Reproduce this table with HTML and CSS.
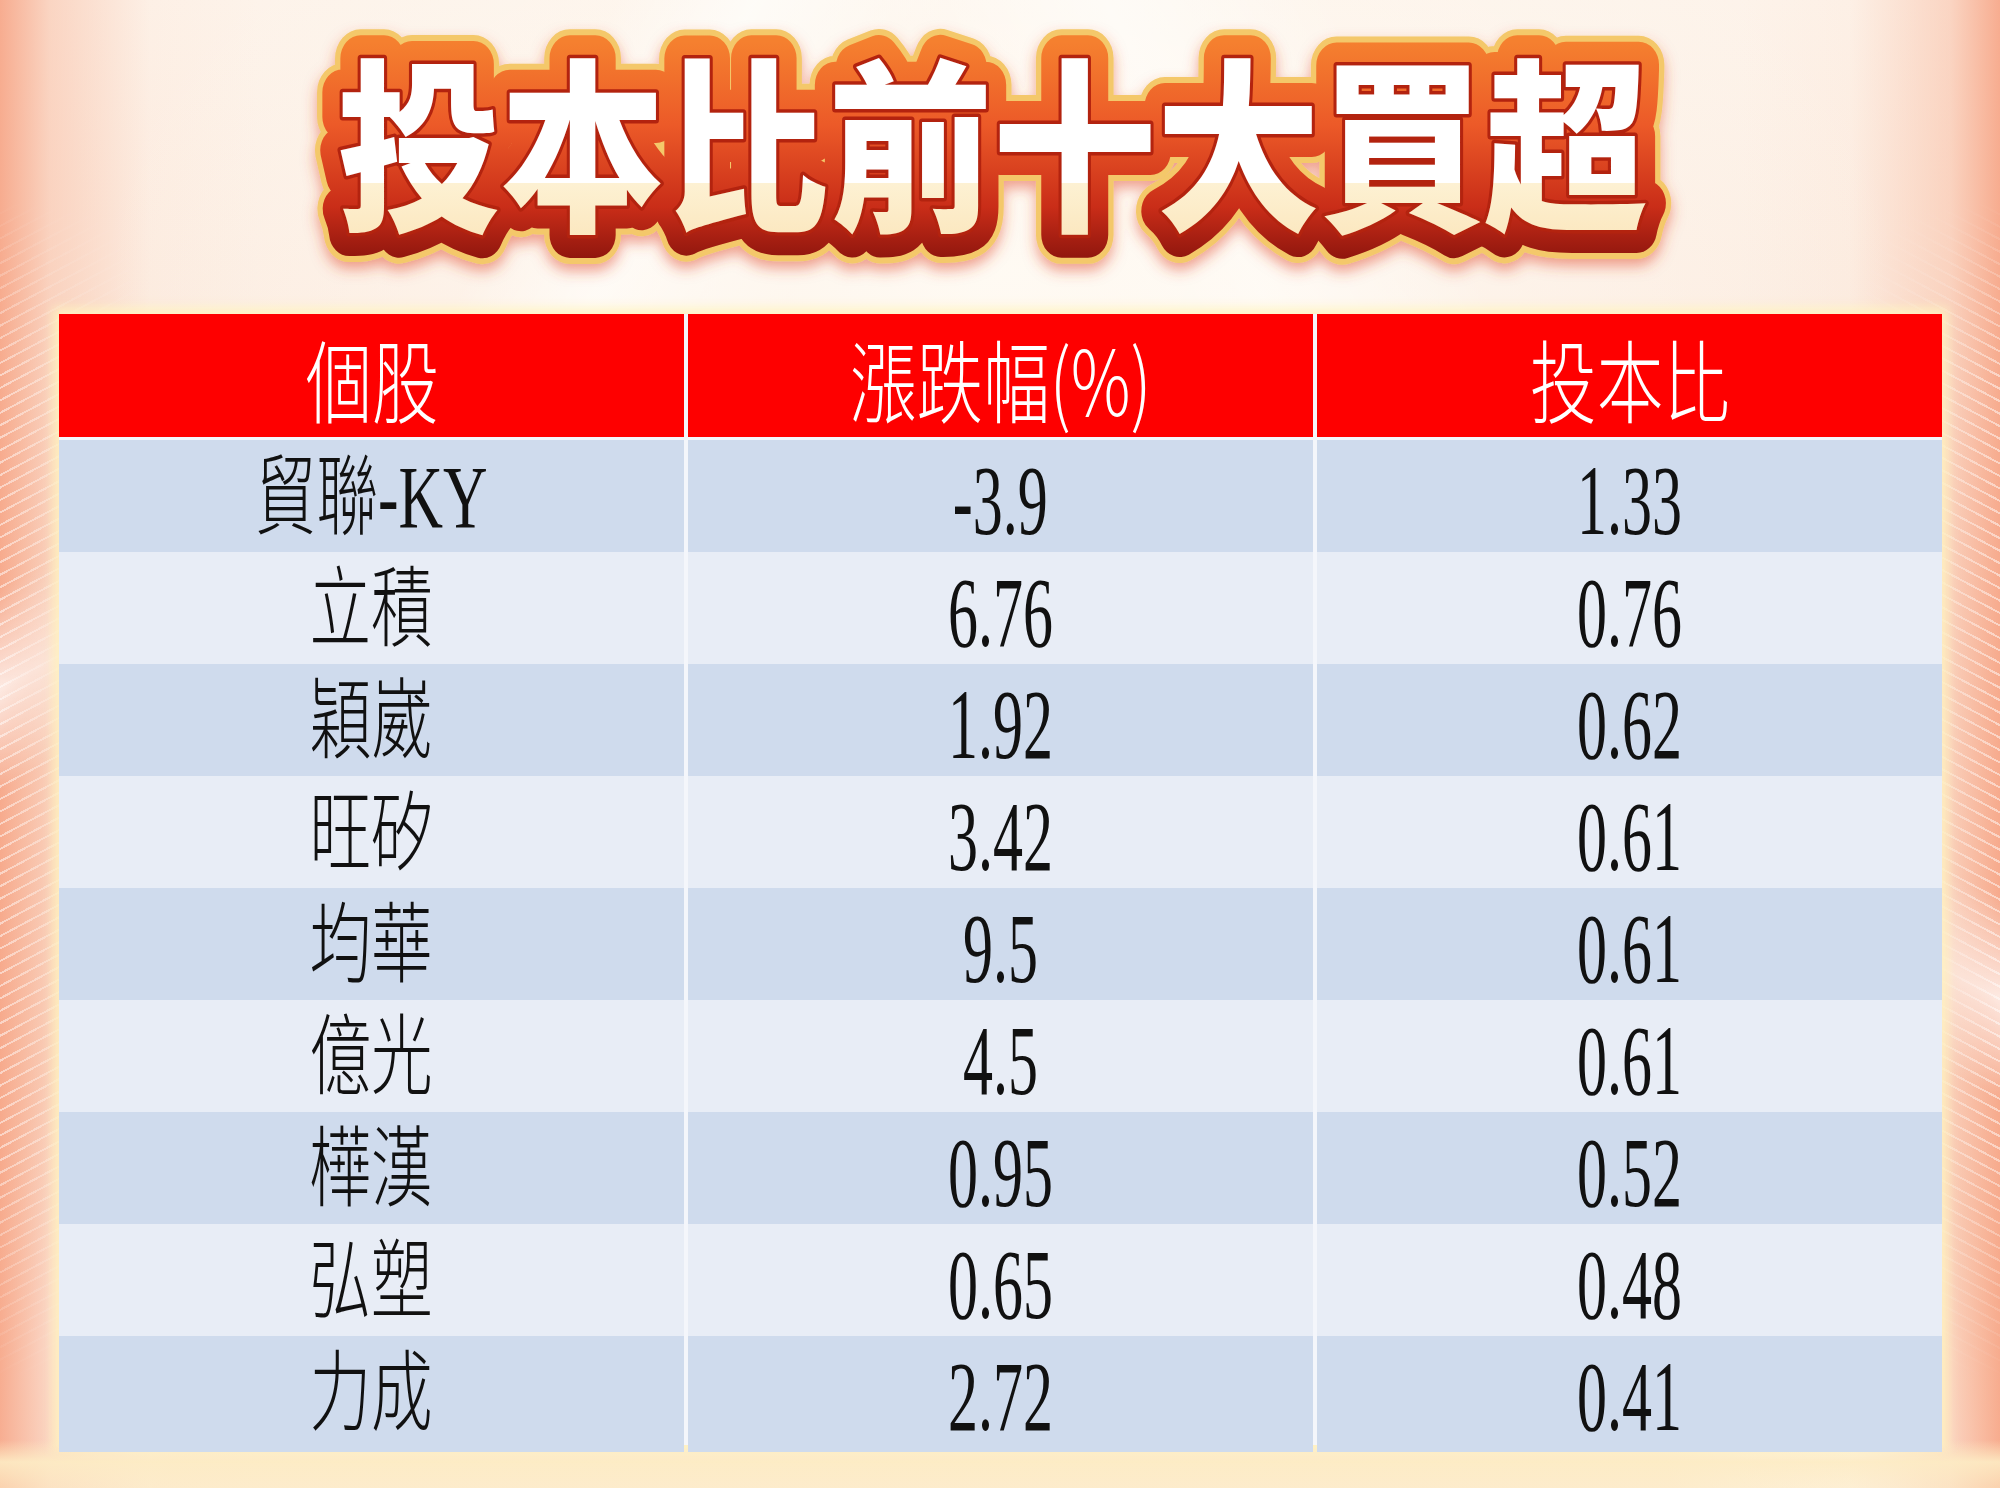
FILE: index.html
```html
<!DOCTYPE html>
<html lang="zh-Hant">
<head>
<meta charset="utf-8">
<title>投本比前十大買超</title>
<link rel="stylesheet" href="styles.css">
</head>
<body>
<div class="deco deco-left"></div>
<div class="deco deco-right"></div>
<main class="page">
  <svg class="title" width="1400" height="280" viewBox="0 0 1400 280">
    <defs>
      <linearGradient id="redGrad" gradientUnits="userSpaceOnUse" x1="0" y1="22" x2="0" y2="258">
        <stop offset="0" stop-color="#f5802f"/>
        <stop offset="0.35" stop-color="#ec5a28"/>
        <stop offset="0.7" stop-color="#c92d18"/>
        <stop offset="1" stop-color="#7a0d0a"/>
      </linearGradient>
      <linearGradient id="fillGrad" gradientUnits="userSpaceOnUse" x1="0" y1="40" x2="0" y2="232">
        <stop offset="0" stop-color="#ffffff"/>
        <stop offset="0.64" stop-color="#ffffff"/>
        <stop offset="0.64" stop-color="#fdf1d3"/>
        <stop offset="1" stop-color="#fbe5ba"/>
      </linearGradient>
      <filter id="glow" x="-5%" y="-20%" width="110%" height="150%">
        <feDropShadow dx="0" dy="7" stdDeviation="7" flood-color="#e0452c" flood-opacity="0.5"/>
      </filter>
    </defs>
    <use href="#titleText" class="t-gold" filter="url(#glow)"/>
    <use href="#titleText" class="t-red"/>
    <use href="#titleText" class="t-edge"/>
    <text id="titleText" class="t-fill" x="37" y="197" textLength="1311" lengthAdjust="spacingAndGlyphs">投本比前十大買超</text>
  </svg>

  <section class="table">
    <div class="row head">
      <div class="cell"><span class="h">個股</span></div>
      <div class="cell"><span class="h">漲跌幅(%)</span></div>
      <div class="cell"><span class="h">投本比</span></div>
    </div>
    <div class="row odd">
      <div class="cell"><span class="n">貿聯-KY</span></div>
      <div class="cell"><span class="v">-3.9</span></div>
      <div class="cell"><span class="v">1.33</span></div>
    </div>
    <div class="row even">
      <div class="cell"><span class="n">立積</span></div>
      <div class="cell"><span class="v">6.76</span></div>
      <div class="cell"><span class="v">0.76</span></div>
    </div>
    <div class="row odd">
      <div class="cell"><span class="n">穎崴</span></div>
      <div class="cell"><span class="v">1.92</span></div>
      <div class="cell"><span class="v">0.62</span></div>
    </div>
    <div class="row even">
      <div class="cell"><span class="n">旺矽</span></div>
      <div class="cell"><span class="v">3.42</span></div>
      <div class="cell"><span class="v">0.61</span></div>
    </div>
    <div class="row odd">
      <div class="cell"><span class="n">均華</span></div>
      <div class="cell"><span class="v">9.5</span></div>
      <div class="cell"><span class="v">0.61</span></div>
    </div>
    <div class="row even">
      <div class="cell"><span class="n">億光</span></div>
      <div class="cell"><span class="v">4.5</span></div>
      <div class="cell"><span class="v">0.61</span></div>
    </div>
    <div class="row odd">
      <div class="cell"><span class="n">樺漢</span></div>
      <div class="cell"><span class="v">0.95</span></div>
      <div class="cell"><span class="v">0.52</span></div>
    </div>
    <div class="row even">
      <div class="cell"><span class="n">弘塑</span></div>
      <div class="cell"><span class="v">0.65</span></div>
      <div class="cell"><span class="v">0.48</span></div>
    </div>
    <div class="row odd">
      <div class="cell"><span class="n">力成</span></div>
      <div class="cell"><span class="v">2.72</span></div>
      <div class="cell"><span class="v">0.41</span></div>
    </div>
  </section>
</main>
</body>
</html>
```

FILE: styles.css
```css
html, body {
  margin: 0;
  padding: 0;
}

body {
  width: 2000px;
  height: 1500px;
  overflow: hidden;
  position: relative;
  font-family: "Liberation Serif", "Noto Sans CJK TC", serif;
  background:
    linear-gradient(to bottom, rgba(255,255,255,0) 1488px, #ffffff 1488px),
    linear-gradient(to bottom, rgba(255,255,255,0) 1440px, rgba(253,236,196,0.9) 1462px, rgba(253,236,196,0.6) 1486px),
    radial-gradient(ellipse 900px 520px at 50% 18%, rgba(255,251,244,0.95) 0, rgba(255,251,244,0) 100%),
    linear-gradient(to right, rgba(246,160,128,0.85) 0, rgba(248,188,162,0.55) 50px, rgba(252,222,205,0.15) 150px, rgba(255,255,255,0) 260px),
    linear-gradient(to left, rgba(246,160,128,0.85) 0, rgba(248,188,162,0.55) 50px, rgba(252,222,205,0.15) 150px, rgba(255,255,255,0) 260px),
    linear-gradient(118deg, rgba(255,255,255,0) 0, rgba(255,255,255,0) 22%, rgba(255,255,255,0.75) 27%, rgba(255,255,255,0) 34%),
    linear-gradient(62deg, rgba(255,255,255,0) 60%, rgba(255,255,255,0.7) 68%, rgba(255,255,255,0) 76%),
    linear-gradient(to bottom, #fdf3ea 0, #fbe6d8 40%, #fbe2d2 75%, #fdecd6 100%);
}

.deco {
  position: absolute;
  top: 200px;
  width: 200px;
  height: 1180px;
  pointer-events: none;
}

.deco-left {
  left: 0;
  background:
    linear-gradient(152deg, rgba(255,255,255,0) 30%, rgba(255,255,255,0.75) 38%, rgba(255,255,255,0) 46%),
    repeating-linear-gradient(152deg, rgba(255,255,255,0.5) 0 2px, rgba(255,255,255,0) 2px 11px);
  -webkit-mask-image: linear-gradient(to right, #000 0, rgba(0,0,0,0.55) 55px, transparent 150px), linear-gradient(to bottom, transparent 0, #000 15%, #000 80%, transparent 100%);
  -webkit-mask-composite: source-in;
  mask-image: linear-gradient(to right, #000 0, rgba(0,0,0,0.55) 55px, transparent 150px), linear-gradient(to bottom, transparent 0, #000 15%, #000 80%, transparent 100%);
  mask-composite: intersect;
}

.deco-right {
  right: 0;
  background:
    linear-gradient(28deg, rgba(255,255,255,0) 30%, rgba(255,255,255,0.75) 38%, rgba(255,255,255,0) 46%),
    repeating-linear-gradient(28deg, rgba(255,255,255,0.5) 0 2px, rgba(255,255,255,0) 2px 11px);
  -webkit-mask-image: linear-gradient(to left, #000 0, rgba(0,0,0,0.55) 55px, transparent 150px), linear-gradient(to bottom, transparent 0, #000 15%, #000 80%, transparent 100%);
  -webkit-mask-composite: source-in;
  mask-image: linear-gradient(to left, #000 0, rgba(0,0,0,0.55) 55px, transparent 150px), linear-gradient(to bottom, transparent 0, #000 15%, #000 80%, transparent 100%);
  mask-composite: intersect;
}

.page {
  position: relative;
  padding-top: 20px;
}

.title {
  display: block;
  margin: 0 auto;
  overflow: visible;
}

.t-fill {
  font-family: "Noto Sans CJK TC", "Noto Sans CJK SC", sans-serif;
  font-size: 185px;
  font-weight: 900;
  fill: url(#fillGrad);
}

.t-gold {
  stroke: #f4c86a;
  stroke-width: 58px;
  stroke-linejoin: round;
}

.t-red {
  stroke: url(#redGrad);
  stroke-width: 46px;
  stroke-linejoin: round;
}

.t-edge {
  stroke: #b3230f;
  stroke-width: 7px;
  stroke-linejoin: round;
}

.table {
  margin: 14px 0 0 59px;
  width: 1883px;
  display: flex;
  flex-direction: column;
  gap: 3px;
  background: #f4f6fb;
  box-shadow: 0 0 10px 6px rgba(255, 243, 190, 0.85);
}

.row {
  display: grid;
  grid-template-columns: repeat(3, 1fr);
  column-gap: 4px;
  height: 109px;
}

.row.head {
  height: 123px;
}

.cell {
  display: flex;
  align-items: center;
  justify-content: center;
  min-width: 0;
}

.head .cell {
  background: #fe0000;
}

.odd .cell {
  background: #cfdbed;
}

.even .cell {
  background: #e8edf6;
}

.h {
  display: inline-block;
  color: #ffffff;
  font-family: "Noto Sans CJK TC", "Noto Sans CJK SC", sans-serif;
  font-weight: 300;
  font-size: 90px;
  line-height: 1.1;
  transform: scaleX(0.74);
  margin-top: 4px;
  white-space: nowrap;
}

.n {
  display: inline-block;
  color: #111111;
  font-family: "Liberation Serif", "Noto Sans CJK TC", serif;
  font-weight: 300;
  font-size: 88px;
  line-height: 1.1;
  transform: scaleX(0.7);
  white-space: nowrap;
}

.v {
  display: inline-block;
  color: #111111;
  font-family: "Liberation Serif", serif;
  font-size: 100px;
  line-height: 1.1;
  transform: scaleX(0.6);
  margin-top: 6px;
  white-space: nowrap;
}
```
